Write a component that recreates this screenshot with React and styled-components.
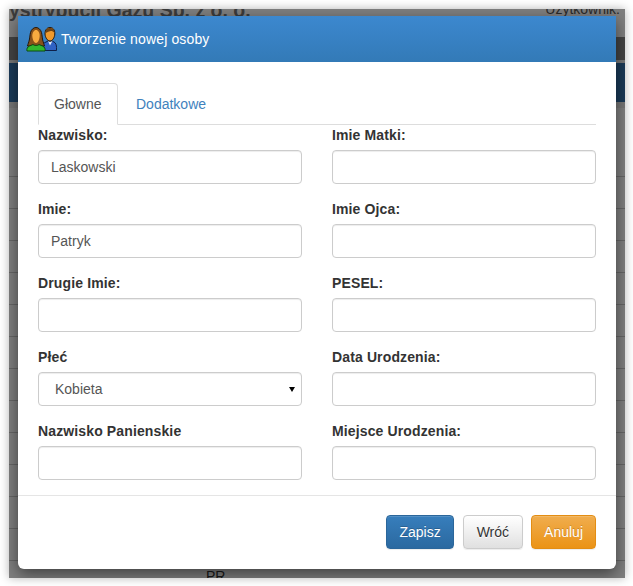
import { createGlobalStyle } from "styled-components";
import styled from "styled-components";

const GlobalStyle = createGlobalStyle`
  html, body {
    margin: 0;
    background: #fff;
    font-family: "Liberation Sans", Arial, sans-serif;
    font-size: 14px;
    line-height: 20px;
    color: #333;
  }
  body {
    height: 586px;
    padding: 9px 0 0 9px;
    overflow: hidden;
  }
  * {
    box-sizing: border-box;
  }
`;

const leftFields = [
  { label: "Nazwisko:", value: "Laskowski" },
  { label: "Imie:", value: "Patryk" },
  { label: "Drugie Imie:", value: "" },
  { label: "Płeć", value: "Kobieta", select: true },
  { label: "Nazwisko Panienskie", value: "" },
];

const rightFields = [
  { label: "Imie Matki:" },
  { label: "Imie Ojca:" },
  { label: "PESEL:" },
  { label: "Data Urodzenia:" },
  { label: "Miejsce Urodzenia:" },
];

const PeopleIcon = () => (
  <svg width="32" height="26" viewBox="0 0 32 26">
    {/* man */}
    <path
      d="M17 24.500v-3c0-3 1.500-4.500 4-5.500l2-1h4l2 1c2 1 2.500 3.500 2.500 5.500v3z"
      fill="#2f62c4"
      stroke="#0f2048"
      strokeWidth="1"
    />
    <path d="M23 15l2 4.500 2.500-4.500-2.500 1z" fill="#e4ecf7" />
    <path
      d="M20 8c0-4.500 2.300-6.500 5-6.500s5 2 4.800 6.500c-.2 3.500-2.200 7-4.800 7s-4.800-3.500-5-7z"
      fill="#ef9a2d"
      stroke="#24170a"
      strokeWidth="1"
    />
    <path d="M20.500 7.500c0-4 2-5.500 4.500-5.500s4.500 1.500 4.500 5c-1.500-1.800-3-2.300-4.500-1.800-1.500.5-3 .5-4.500 2.300z" fill="#6e4314" />
    {/* woman */}
    <path
      d="M2.500 20c.5-2 1.200-3.500 1.800-6 .6-3 .6-5 1.200-7.500C6.300 3.500 8.500 1.500 11 1.500s4.700 2 5.500 5c.6 2.500.6 4.500 1.200 7.500.6 2.500 1.300 4 1.800 6z"
      fill="#87511a"
      stroke="#24170a"
      strokeWidth="1"
    />
    <path d="M7.300 9.500c0-3 1.700-5.500 3.700-5.500s3.700 2.500 3.700 5.500-1.500 7.500-3.700 7.500-3.700-4.500-3.700-7.500z" fill="#f7ab40" />
    <path
      d="M2 25c-.5-2 .2-4 2.500-5l3.500-1.500c1 1.200 5 1.200 6 0l3.500 1.500c2.300 1 3 3 2.500 5z"
      fill="#33b82e"
      stroke="#0d4a12"
      strokeWidth="1"
    />
  </svg>
);

const App = () => {
  const renderField = (field) => (
    <Field key={field.label}>
      <Label>{field.label}</Label>
      {field.select ? (
        <SelectWrap>
          <Select defaultValue={field.value}>
            <option>Kobieta</option>
            <option>Mężczyzna</option>
          </Select>
        </SelectWrap>
      ) : (
        <Input type="text" defaultValue={field.value} />
      )}
    </Field>
  );

  return (
    <Frame>
      <GlobalStyle />
      <TopBar>
        <Company>ystrybucji Gazu Sp. z o. o.</Company>
        <UserName>Użytkownik:</UserName>
      </TopBar>
      <DarkBar />
      <GapBar />
      <NavBar />
      <GapBar $short />
      <TableHead />
      {[0, 1, 2, 3, 4, 5, 6, 7, 8, 9, 10, 11].map((i) => (
        <TableRow key={i} />
      ))}
      <LastRow>PR</LastRow>
      <Backdrop />
      <Modal>
        <ModalHeader>
          <PeopleIcon />
          <ModalTitle>Tworzenie nowej osoby</ModalTitle>
        </ModalHeader>
        <ModalBody>
          <Tabs>
            <Tab $active>Głowne</Tab>
            <Tab>Dodatkowe</Tab>
          </Tabs>
          <Columns>
            <div>{leftFields.map(renderField)}</div>
            <div>{rightFields.map(renderField)}</div>
          </Columns>
        </ModalBody>
        <ModalFooter>
          <Button $kind="primary">Zapisz</Button>
          <Button>Wróć</Button>
          <Button $kind="warning">Anuluj</Button>
        </ModalFooter>
      </Modal>
    </Frame>
  );
};

const buttonColors = {
  primary: `
    margin-right: 1px;
    padding: 6px 12px;
    color: #fff;
    background: linear-gradient(to bottom, #377ebc, #2b69a0);
    border-color: #2b669a;
    text-shadow: 0 -1px 0 rgba(0, 0, 0, 0.2);
  `,
  warning: `
    padding: 6px 12px;
    color: #fff;
    background: linear-gradient(to bottom, #f0ad4e, #eb9316);
    border-color: #e38d13;
    text-shadow: 0 -1px 0 rgba(0, 0, 0, 0.2);
  `,
  default: `
    padding: 6px 13px;
    color: #333;
    background: linear-gradient(to bottom, #fff, #e0e0e0);
    border-color: #ccc;
    text-shadow: 0 1px 0 #fff;
  `,
};

const Frame = styled.div`
  position: relative;
  width: 616px;
  height: 569px;
  overflow: hidden;
  background: #fff;
  box-shadow: 0 0 9px rgba(0, 0, 0, 0.3);
`;

const TopBar = styled.div`
  display: flex;
  justify-content: space-between;
  height: 28px;
  padding-right: 5px;
  overflow: hidden;
`;

const Company = styled.div`
  margin-top: -15px;
  font-size: 19.5px;
  line-height: 32px;
  font-weight: 700;
  color: #777;
`;

const UserName = styled.div`
  margin-top: -10px;
  font-size: 14px;
  line-height: 20px;
  color: #555;
`;

const DarkBar = styled.div`
  height: 23px;
  background: #888;
`;

const GapBar = styled.div`
  height: ${(props) => (props.$short ? "6px" : "3px")};
  background: #eee;
`;

const NavBar = styled.div`
  height: 39px;
  background: #3674b0;
`;

const TableHead = styled.div`
  height: 69px;
  border-bottom: 1px solid #ccc;
`;

const TableRow = styled.div`
  height: 32px;
  border-bottom: 1px solid #ccc;
`;

const LastRow = styled.div`
  padding: 5px 0 0 197px;
  font-size: 14px;
`;

const Backdrop = styled.div`
  position: absolute;
  inset: 0;
  background: rgba(0, 0, 0, 0.5);
`;

const Modal = styled.div`
  position: absolute;
  left: 9px;
  top: 7px;
  width: 598px;
  height: 553px;
  background: #fff;
  border-radius: 1px 1px 6px 6px;
  box-shadow: 0 5px 15px rgba(0, 0, 0, 0.5);
`;

const ModalHeader = styled.div`
  display: flex;
  align-items: center;
  gap: 4px;
  height: 46px;
  padding: 0 0 0 7px;
  background: linear-gradient(to bottom, #3c88cf, #337ab7);
`;

const ModalTitle = styled.div`
  color: #fff;
  font-size: 14px;
  letter-spacing: 0.14px;
`;

const ModalBody = styled.div`
  padding: 21px 20px 0;
`;

const Tabs = styled.div`
  display: flex;
  gap: 2px;
  height: 42px;
  border-bottom: 1px solid #ddd;
`;

const Tab = styled.div`
  min-width: 80px;
  height: ${(props) => (props.$active ? "42px" : "41px")};
  padding: 10px 15px;
  color: ${(props) => (props.$active ? "#555" : "#3f82bd")};
  background: ${(props) => (props.$active ? "#fff" : "transparent")};
  border: 1px solid ${(props) => (props.$active ? "#ddd" : "transparent")};
  border-bottom-color: ${(props) => (props.$active ? "#fff" : "transparent")};
  border-radius: 4px 4px 0 0;
`;

const Columns = styled.div`
  display: grid;
  grid-template-columns: 264px 264px;
  column-gap: 30px;
`;

const Field = styled.div`
  margin-bottom: 15px;
`;

const Label = styled.label`
  display: block;
  margin-bottom: 5px;
  font-weight: 700;
  letter-spacing: 0.13px;
`;

const Input = styled.input`
  display: block;
  width: 100%;
  height: 34px;
  padding: 6px 12px;
  font: inherit;
  color: #555;
  background: #fff;
  border: 1px solid #ccc;
  border-radius: 4px;
  box-shadow: inset 0 1px 1px rgba(0, 0, 0, 0.075);
  outline: none;
`;

const SelectWrap = styled.div`
  position: relative;

  &::after {
    content: "";
    position: absolute;
    right: 7px;
    top: 15px;
    border-style: solid;
    border-width: 5px 3px 0;
    border-color: #000 transparent transparent;
  }
`;

const Select = styled.select`
  display: block;
  width: 100%;
  height: 34px;
  padding: 6px 12px 6px 16px;
  font: inherit;
  color: #555;
  background: #fff;
  border: 1px solid #ccc;
  border-radius: 4px;
  box-shadow: inset 0 1px 1px rgba(0, 0, 0, 0.075);
  appearance: none;
  outline: none;
`;

const ModalFooter = styled.div`
  display: flex;
  justify-content: flex-end;
  gap: 8px;
  padding: 19px 20px 20px;
  border-top: 1px solid #e5e5e5;
`;

const Button = styled.button`
  height: 34px;
  font: inherit;
  border: 1px solid;
  border-radius: 4px;
  box-shadow: inset 0 1px 0 rgba(255, 255, 255, 0.15), 0 1px 1px rgba(0, 0, 0, 0.075);
  ${(props) => buttonColors[props.$kind || "default"]}
`;

export default App;
